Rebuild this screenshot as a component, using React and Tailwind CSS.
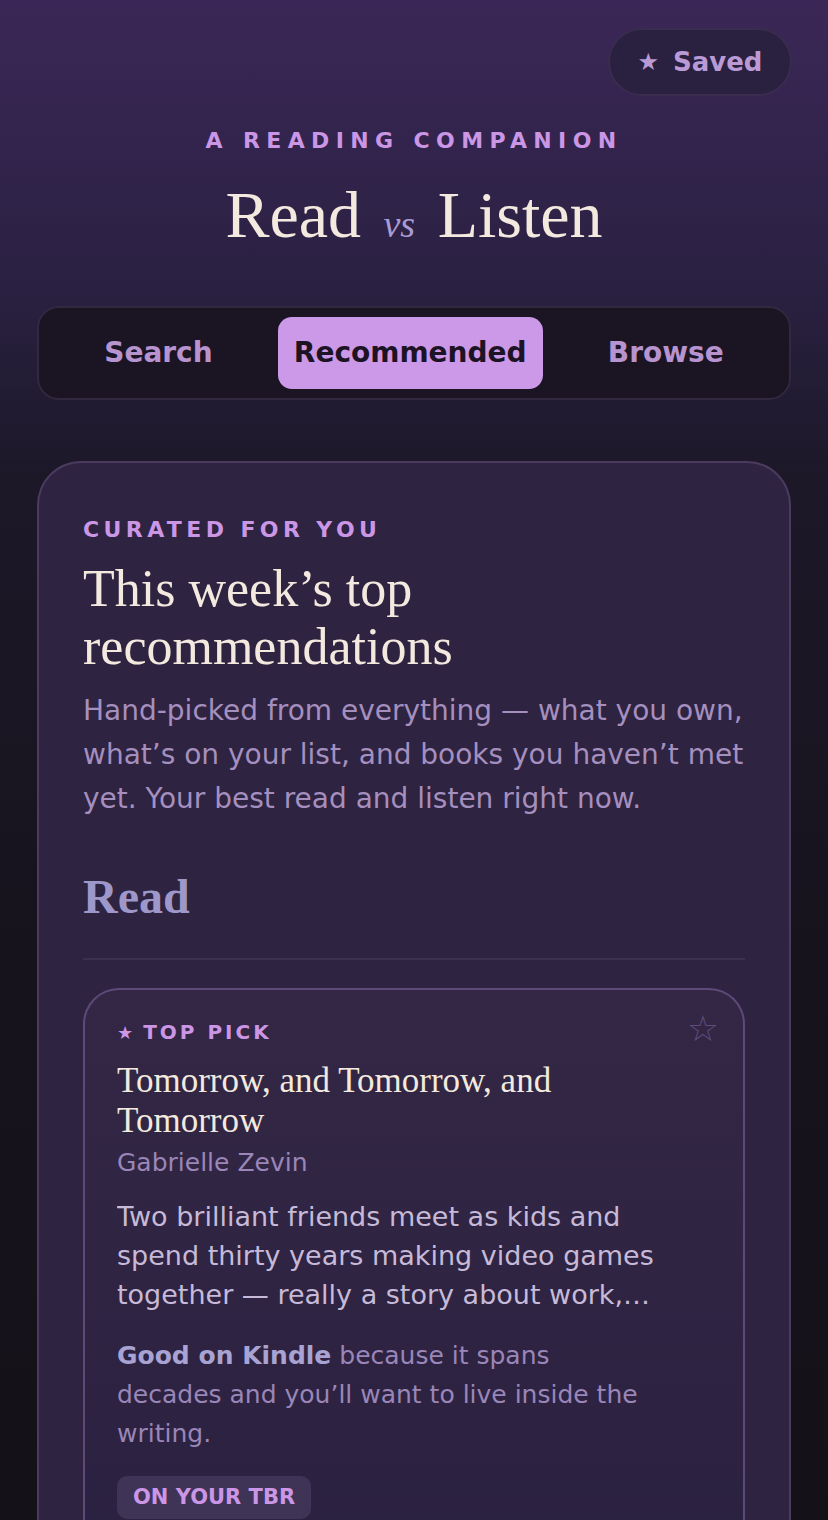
const sans = { fontFamily: '"DejaVu Sans", "Noto Sans", sans-serif' }
const serif = { fontFamily: '"Liberation Serif", serif' }

export default function App() {
  return (
    <div
      className="min-h-[1520px] bg-[linear-gradient(180deg,#3b2757_0%,#2a2142_18%,#1c1828_30%,#17131d_60%,#141118_100%)] text-[#f3e9e0]"
      style={sans}
    >
      <div className="px-[37px] pt-[28px]">
        <div className="flex justify-end">
          <button className="-mr-[1px] flex h-[68px] w-[184px] items-center justify-center gap-[14px] rounded-full border-2 border-[#3a2c4e] bg-[#2a2040] text-[26px] font-bold text-[#b99ad4]">
            <span className="text-[24px]">★</span>
            <span>Saved</span>
          </button>
        </div>

        <div className="mt-[28px] text-center text-[22px] font-bold tracking-[0.29em] text-[#cb96e6]">
          A READING COMPANION
        </div>
        <h1 className="mt-[22px] text-center text-[66px] leading-[1.1] text-[#f3e9de]" style={serif}>
          Read <span className="mx-[6px] text-[38px] italic text-[#a99bd3]">vs</span> Listen
        </h1>

        <nav className="mt-[54px] flex justify-evenly rounded-[22px] border-2 border-[#32283f] bg-[#1b1523] py-[9px]">
          <button className="h-[72px] rounded-[14px] px-4 text-[28px] font-bold text-[#b793cf]">Search</button>
          <button className="h-[72px] rounded-[14px] bg-[#cc99e9] px-4 text-[28px] font-bold text-[#1c1424]">Recommended</button>
          <button className="h-[72px] rounded-[14px] px-4 text-[28px] font-bold text-[#b793cf]">Browse</button>
        </nav>

        <section className="mt-[61px] rounded-t-[44px] border-2 border-b-0 border-[#4a3b5f] bg-[#2e2340] px-[44px] pt-[50px] pb-[40px]">
          <div className="text-[22px] font-bold tracking-[0.2em] text-[#cb96e6]">CURATED FOR YOU</div>
          <h2 className="mt-[14px] text-[52px] leading-[58px] text-[#f3e9de]" style={serif}>
            This week’s top<br />recommendations
          </h2>
          <p className="mt-[13px] text-[28px] leading-[44px] text-[#a58fbf]">
            Hand-picked from everything — what you own, what’s on your list, and books you haven’t met yet. Your best read and listen right now.
          </p>

          <h3 className="mt-[50px] text-[48px] font-bold leading-[1.1] text-[#9d98c9]" style={serif}>
            Read
          </h3>
          <div className="mt-[35px] h-[2px] bg-[#3b3050]" />

          <article className="mt-[28px] rounded-t-[36px] border-2 border-b-0 border-[#5d4a78] bg-[linear-gradient(180deg,#332745,#2b2140)] px-[32px] pt-[26px] pb-[20px]">
            <div className="flex items-start justify-between">
              <div className="flex items-center gap-[10px] pt-[1px] text-[20px] font-bold tracking-[0.15em] text-[#cb96e6]">
                <span className="text-[18px] tracking-normal">★</span>
                <span>TOP PICK</span>
              </div>
              <span className="-mt-[6px] -mr-[8px] text-[36px] leading-[38px] text-[#5e4b7a]">☆</span>
            </div>
            <h4 className="mt-[13px] text-[35px] leading-[40px] text-[#f3e9de]" style={serif}>
              Tomorrow, and Tomorrow, and<br />Tomorrow
            </h4>
            <div className="mt-[4px] text-[25px] leading-[36px] text-[#9a86b8]">Gabrielle Zevin</div>
            <p className="mt-[16px] line-clamp-3 max-w-[570px] text-[27px] leading-[39px] text-[#c7bad8]">
              Two brilliant friends meet as kids and spend thirty years making video games together — really a story about work, love, grief and what we make with the people we love.
            </p>
            <p className="mt-[22px] max-w-[540px] text-[25px] leading-[39px] text-[#9a86b8]">
              <span className="font-bold text-[#a8a3d2]">Good on Kindle</span> because it spans decades and you’ll want to live inside the writing.
            </p>
            <span className="mt-[23px] inline-block rounded-[10px] bg-[#3f3356] px-[16px] py-[6px] text-[21px] font-bold leading-[31px] text-[#cb96e6]">
              ON YOUR TBR
            </span>
          </article>
        </section>
      </div>
    </div>
  )
}
